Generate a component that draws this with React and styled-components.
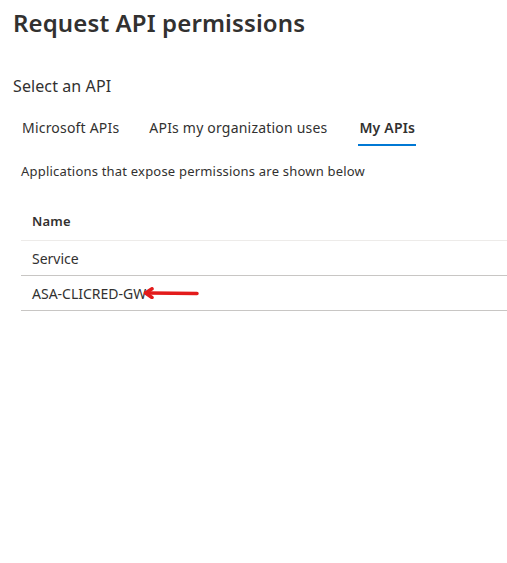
import React from "react";
import styled, { createGlobalStyle } from "styled-components";

const Global = createGlobalStyle`
  html, body { margin: 0; padding: 0; background: #fff; }
  body { font-family: "Segoe UI", "Noto Sans", "Open Sans", sans-serif; color: #323130; }
`;

const Page = styled.div`
  width: 507px;
  height: 563px;
  box-sizing: border-box;
  padding: 6px 0 0 13px;
  overflow: hidden;
`;

const Title = styled.h1`
  margin: 0;
  font-size: 24px;
  font-weight: 600;
  line-height: 34px;
  letter-spacing: 0.12px;
  color: #323130;
`;

const Subtitle = styled.h2`
  margin: 35px 0 0;
  font-size: 16px;
  font-weight: 400;
  line-height: 22px;
  letter-spacing: 0.1px;
  color: #323130;
`;

const Body = styled.div`
  padding-left: 8px;
`;

const Tabs = styled.div`
  display: flex;
  gap: 28px;
  margin-top: 21px;
`;

const Tab = styled.div`
  font-size: 14px;
  line-height: 20px;
  letter-spacing: 0.2px;
  padding: 0 1px 6px;
  margin-left: ${(p) => (p.$active ? "2px" : "0")};
  font-weight: ${(p) => (p.$active ? 600 : 400)};
  color: #323130;
  border-bottom: 2px solid ${(p) => (p.$active ? "#0078d4" : "transparent")};
`;

const Note = styled.p`
  margin: 15px 0 0;
  font-size: 13px;
  line-height: 20px;
  letter-spacing: 0.2px;
  color: #323130;
`;

const Table = styled.div`
  margin-top: 25px;
  display: flex;
  flex-direction: column;
`;

const Row = styled.div`
  display: flex;
  align-items: center;
  height: 35px;
  box-sizing: border-box;
  padding: 0 0 ${(p) => (p.$header ? "4px" : "0")} 11px;
  font-size: ${(p) => (p.$header ? "13px" : "14px")};
  letter-spacing: ${(p) => (p.$header ? "0.2px" : "0")};
  font-weight: ${(p) => (p.$header ? 600 : 400)};
  border-bottom: 1px solid ${(p) => (p.$header ? "#edebe9" : "#c8c6c4")};
  color: #323130;
`;

const Label = styled.span`
  position: relative;
`;

const Arrow = styled.svg`
  position: absolute;
  left: calc(100% - 3px);
  top: 50%;
  margin-top: -6px;
`;

export default function App() {
  return (
    <Page>
      <Global />
      <Title>Request API permissions</Title>
      <Subtitle>Select an API</Subtitle>
      <Body>
        <Tabs>
          <Tab>Microsoft APIs</Tab>
          <Tab>APIs my organization uses</Tab>
          <Tab $active>My APIs</Tab>
        </Tabs>
        <Note>Applications that expose permissions are shown below</Note>
        <Table>
          <Row $header>Name</Row>
          <Row>Service</Row>
          <Row>
            <Label>
              ASA-CLICRED-GW
              <Arrow width="56" height="12" viewBox="0 0 56 12">
                <path d="M54 6.5 L6 6" stroke="#e31b1b" strokeWidth="3.5" strokeLinecap="round" fill="none" />
                <path d="M9 1.8 L2.5 6 L9 10.5" stroke="#e31b1b" strokeWidth="3.5" strokeLinecap="round" strokeLinejoin="round" fill="none" />
              </Arrow>
            </Label>
          </Row>
        </Table>
      </Body>
    </Page>
  );
}
